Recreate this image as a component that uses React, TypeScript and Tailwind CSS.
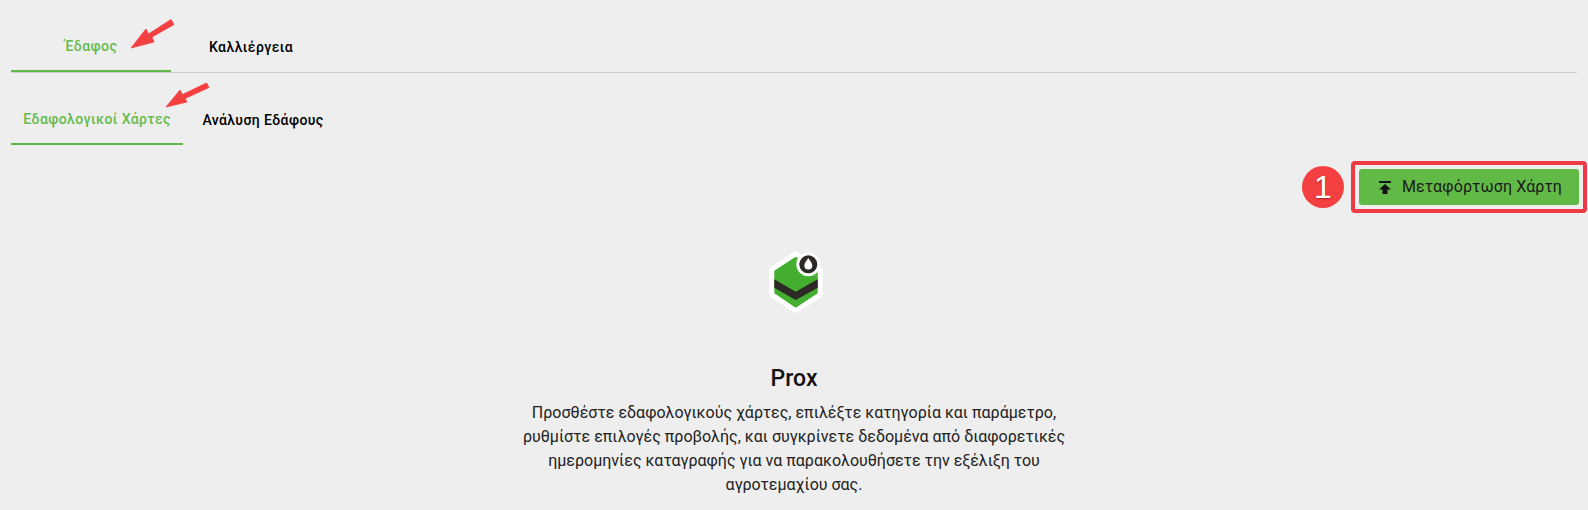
import React from 'react';

function Arrow({ className, d }: { className: string; d: string }) {
  return (
    <svg className={className} width="46" height="32" viewBox="0 0 46 32">
      <path d={d} fill="#f44040" stroke="#f44040" strokeWidth="0.8" strokeLinejoin="round" />
    </svg>
  );
}

function SoilLogo() {
  const hex = 'M29.700 6.700 L51.700 20.700 L51.700 43.300 L29.700 57.700 L8.300 43.300 L8.300 20.700 Z';
  return (
    <svg className="ml-[4px]" width="60" height="66" viewBox="0 0 60 66">
      <path d={hex} fill="#fff" stroke="#fff" strokeWidth="10" strokeLinejoin="round" />
      <path d={hex} fill="#43ae2f" />
      <path d="M8.300 29.300 L29.700 41.700 L51.700 29.300 L51.700 37.700 L29.700 50 L8.300 37.700 Z" fill="#2d2926" />
      <circle cx="42.300" cy="14.300" r="12" fill="#fff" />
      <circle cx="42.300" cy="14.300" r="9" fill="#2d2926" />
      <path d="M42.300 8 C44 10.500 46.300 13 46.300 15.500 A4 4 0 0 1 38.300 15.500 C38.300 13 40.600 10.500 42.300 8 Z" fill="#fff" />
    </svg>
  );
}

export default function App() {
  return (
    <div className="relative h-[510px] w-[1588px] overflow-hidden bg-[#eeeeee] font-['Roboto',sans-serif] text-[#111]">
      {/* annotation arrows */}
      <Arrow className="absolute left-[130px] top-[18px]" d="M1 30 L16 11 L18.500 16 L41 1.500 L44 6.500 L22 19 L24 24 Z" />
      <Arrow className="absolute left-[165px] top-[82px]" d="M1 25 L15 8 L17.500 12.500 L41.500 1 L44 5.500 L20 16.500 L22 20 Z" />

      <div className="px-[11px] pt-[11px]">
        <div className="flex h-[62px] border-b border-[#cfcfcf]">
          <div className="flex h-[61px] w-[160px] items-center justify-center border-b-2 border-[#62ba46] pt-[12px] text-[14px] font-medium tracking-[0.4px] text-[#65bb4c]">
            Έδαφος
          </div>
          <div className="flex h-[61px] w-[160px] items-center justify-center pt-[12px] text-[14px] font-medium tracking-[0.4px] text-black">
            Καλλιέργεια
          </div>
        </div>
        <div className="flex h-[72px]">
          <div className="flex w-[172px] items-center justify-center border-b-2 border-[#62ba46] pt-[22px] text-[14px] font-medium tracking-[0.4px] text-[#65bb4c]">
            Εδαφολογικοί Χάρτες
          </div>
          <div className="flex w-[160px] items-center justify-center pt-[22px] text-[14px] font-medium tracking-[0.4px] text-black">
            Ανάλυση Εδάφους
          </div>
        </div>
      </div>

      <div className="mt-[16px] flex items-center justify-end gap-[7px] pr-px">
        <div className="flex h-[42px] w-[42px] items-center justify-center rounded-full bg-[#f44040] font-['Liberation_Sans',sans-serif] text-[32px] leading-none text-white [text-shadow:0_1px_2px_rgba(0,0,0,0.35)]">
          1
        </div>
        <div className="rounded-[4px] border-4 border-[#ee3a43] p-[4px]">
          <button className="flex h-[36px] w-[220px] items-center justify-center gap-[10px] rounded-[3px] bg-[#62ba46] pl-[2px] text-[16px] tracking-[0.13px] text-[#1a1a1a]">
            <svg width="14" height="14" viewBox="0 0 14 14" fill="#111">
              <path d="M1 1 H13 V3 H1 Z M7 4 L13 9.500 H9.500 V14 H4.500 V9.500 H1 Z" />
            </svg>
            Μεταφόρτωση Χάρτη
          </button>
        </div>
      </div>

      <div className="mt-[37px] flex flex-col items-center">
        <SoilLogo />
        <h2 className="mt-[48px] text-[23px] font-medium leading-[30px]">Prox</h2>
        <p className="mt-[7px] w-[560px] text-center text-[16px] leading-6 text-[#222]">
          Προσθέστε εδαφολογικούς χάρτες, επιλέξτε κατηγορία και παράμετρο, ρυθμίστε επιλογές προβολής, και συγκρίνετε δεδομένα από διαφορετικές ημερομηνίες καταγραφής για να παρακολουθήσετε την εξέλιξη του αγροτεμαχίου σας.
        </p>
      </div>
    </div>
  );
}
